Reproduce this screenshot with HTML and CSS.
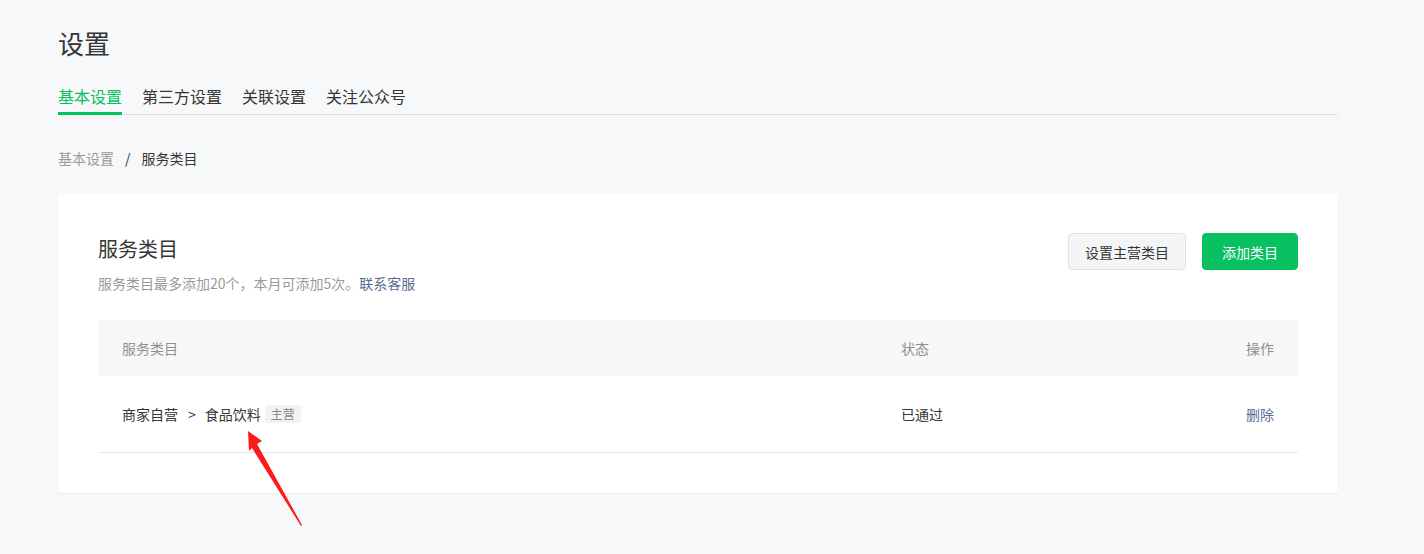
FILE: index.html
```html
<!DOCTYPE html>
<html lang="zh">
<head>
<meta charset="utf-8">
<link rel="stylesheet" href="styles.css">
</head>
<body>
<div class="page">
  <h1 class="page-title">设置</h1>
  <div class="tabs">
    <div class="tab active">基本设置</div>
    <div class="tab">第三方设置</div>
    <div class="tab">关联设置</div>
    <div class="tab">关注公众号</div>
  </div>
  <div class="breadcrumb">
    <span class="crumb-link">基本设置</span>
    <span class="crumb-sep">/</span>
    <span class="crumb-current">服务类目</span>
  </div>
  <div class="card">
    <div class="card-head">
      <div class="card-info">
        <div class="card-title">服务类目</div>
        <div class="card-desc">服务类目最多添加20个，本月可添加5次。<span class="link">联系客服</span></div>
      </div>
      <div class="card-actions">
        <button class="btn btn-default">设置主营类目</button>
        <button class="btn btn-primary">添加类目</button>
      </div>
    </div>
    <div class="table">
      <div class="tr th">
        <div class="td col-name">服务类目</div>
        <div class="td col-status">状态</div>
        <div class="td col-op">操作</div>
      </div>
      <div class="tr">
        <div class="td col-name">商家自营<span class="gt">&gt;</span>食品饮料<span class="tag">主营</span></div>
        <div class="td col-status">已通过</div>
        <div class="td col-op"><span class="link">删除</span></div>
      </div>
    </div>
  </div>
</div>
<svg class="arrow" width="80" height="110" viewBox="0 0 80 110">
  <polygon fill="#fb1b1b" points="8,1 22,11 17,14 62,95 61,96 12,18 9,21"/>
</svg>
</body>
</html>
```
FILE: styles.css
```css
* { box-sizing: border-box; }
html, body { margin: 0; padding: 0; }
body {
  background: #f7f8fa;
  font-family: "Noto Sans CJK SC", "Noto Sans", sans-serif;
  color: #353535;
  width: 1424px;
  height: 554px;
  position: relative;
  overflow: hidden;
}
.page {
  width: 1280px;
  margin-left: 58px;
  padding-top: 24px;
}
.page-title {
  margin: 0;
  font-size: 26px;
  font-weight: 400;
  line-height: 38px;
  color: #353535;
}
.tabs {
  display: flex;
  gap: 20px;
  margin-top: 23px;
  border-bottom: 1px solid #e0e1e3;
}
.tab {
  font-size: 16px;
  line-height: 22px;
  padding-bottom: 5px;
  color: #353535;
  border-bottom: 3px solid transparent;
  margin-bottom: -1px;
}
.tab.active {
  color: #07c160;
  border-bottom-color: #07c160;
}
.breadcrumb {
  margin-top: 33px;
  font-size: 14px;
  line-height: 20px;
  display: flex;
  align-items: center;
}
.crumb-link { color: #9a9a9a; }
.crumb-sep { color: #353535; margin: 0 11px; }
.crumb-current { color: #353535; }
.card {
  margin-top: 25px;
  background: #fff;
  border-radius: 4px;
  box-shadow: 0 1px 2px rgba(0,0,0,0.06);
  padding: 40px 40px 40px;
}
.card-head {
  display: flex;
  justify-content: space-between;
  align-items: flex-start;
}
.card-title {
  font-size: 20px;
  line-height: 30px;
  margin-top: 1px;
  color: #353535;
}
.card-desc {
  margin-top: 9px;
  font-size: 14px;
  line-height: 20px;
  color: #9a9a9a;
}
.link { color: #576b95; }
.card-actions {
  display: flex;
  gap: 16px;
}
.btn {
  font-family: inherit;
  font-size: 14px;
  height: 37px;
  border-radius: 4px;
  padding: 0 16px;
  cursor: pointer;
}
.btn-default {
  background: #f4f5f7;
  border: 1px solid #e1e2e4;
  color: #353535;
  width: 118px;
}
.btn-primary {
  background: #07c160;
  border: 1px solid #07c160;
  color: #fff;
  width: 96px;
}
.table {
  margin-top: 27px;
}
.tr {
  display: flex;
  align-items: center;
  height: 77px;
  border-bottom: 1px solid #e6e7e9;
  font-size: 14px;
  color: #353535;
}
.tr.th {
  height: 56px;
  background: #f6f7f9;
  border-bottom: none;
  color: #909090;
}
.td { padding: 0 24px; }
.col-name { flex: 1; display: flex; align-items: center; }
.col-status { width: 301px; }
.col-op { width: 120px; text-align: right; }
.gt { margin: 0 9px 0 10px; }
.tag {
  margin-left: 4px;
  font-size: 12px;
  line-height: 18px;
  padding: 0 6px;
  background: #f2f2f2;
  color: #888;
  border-radius: 2px;
}
.arrow {
  position: absolute;
  left: 240px;
  top: 430px;
}
```
